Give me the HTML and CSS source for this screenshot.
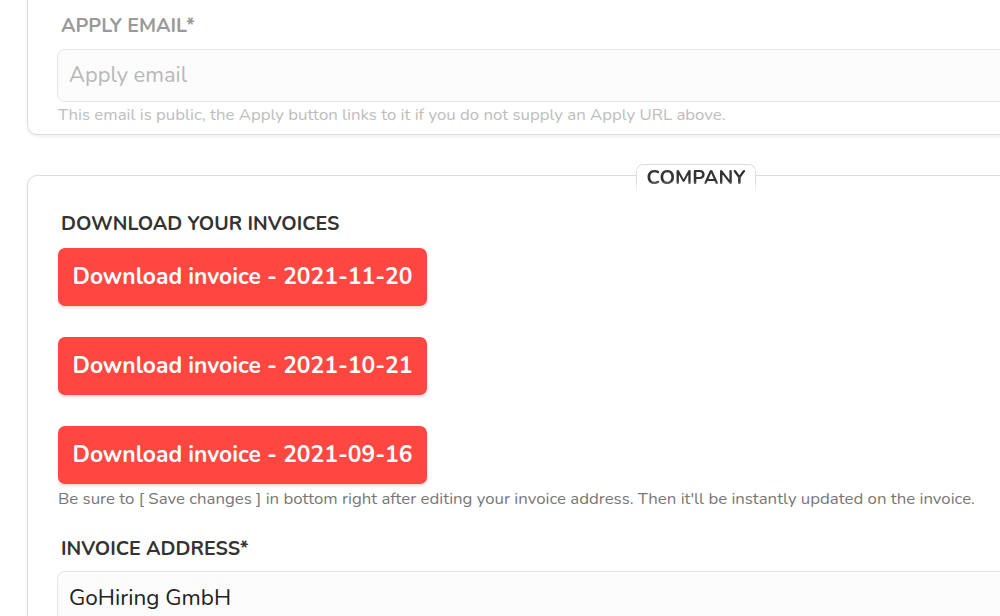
FILE: index.html
```html
<!DOCTYPE html>
<html>
<head>
<meta charset="utf-8">
<link rel="stylesheet" href="styles.css">
</head>
<body>
<div class="page">
  <section class="card card-top">
    <label class="label label-muted">APPLY EMAIL*</label>
    <div class="input placeholder">Apply email</div>
    <p class="help help-light">This email is public, the Apply button links to it if you do not supply an Apply URL above.</p>
  </section>

  <section class="card card-company">
    <div class="tab">COMPANY</div>
    <label class="label">DOWNLOAD YOUR INVOICES</label>
    <div class="buttons">
      <a class="btn">Download invoice - 2021-11-20</a>
      <a class="btn">Download invoice - 2021-10-21</a>
      <a class="btn">Download invoice - 2021-09-16</a>
    </div>
    <p class="help">Be sure to [ Save changes ] in bottom right after editing your invoice address. Then it'll be instantly updated on the invoice.</p>
    <label class="label label-address">INVOICE ADDRESS*</label>
    <div class="input value">GoHiring GmbH</div>
  </section>
</div>
</body>
</html>
```

FILE: styles.css
```css
html, body {
  margin: 0;
  padding: 0;
  background: #ffffff;
  overflow: hidden;
  height: 616px;
}

body {
  font-family: "Nunito", "Lato", "Open Sans", sans-serif;
  color: #333;
}

.page {
  padding-left: 27px;
  margin-top: -40px;
  width: 1336px;
}

.card {
  position: relative;
  border: 1px solid #dcdcdc;
  border-radius: 10px;
  box-shadow: 0 2px 3px rgba(0, 0, 0, 0.06);
  padding: 0 30px;
  background: #fff;
}

.card-top {
  padding-top: 55px;
  padding-bottom: 9px;
}

.card-company {
  margin-top: 40px;
  padding-top: 38px;
  padding-bottom: 40px;
}

.tab {
  position: absolute;
  top: -12px;
  left: 608px;
  width: 120px;
  height: 28px;
  box-sizing: border-box;
  border: 1px solid #dcdcdc;
  border-bottom: none;
  border-radius: 7px 7px 0 0;
  background: #fff;
  text-align: center;
  font-weight: 700;
  font-size: 19.8px;
  line-height: 26px;
  color: #333;
  -webkit-mask-image: linear-gradient(#000 60%, rgba(0,0,0,0.0));
}

.label {
  display: block;
  font-weight: 700;
  font-size: 19.6px;
  line-height: 20px;
  padding-left: 3px;
  color: #333;
}

.label-muted {
  color: #9a9a9a;
}

.card-top .label {
  margin-bottom: 13px;
}

.input {
  height: 53px;
  box-sizing: border-box;
  border: 1px solid #e6e6e6;
  border-radius: 8px;
  background: #fcfcfc;
  margin-left: -1px;
  padding-left: 11px;
  font-size: 21.9px;
  line-height: 51px;
}

.placeholder {
  color: #b8b8b8;
}

.value {
  color: #222;
  font-size: 22.5px;
}

.help {
  margin: 3px 0 0;
  font-size: 16.8px;
  line-height: 20px;
  color: #777;
}

.help-light {
  color: #bdbdbd;
}

.buttons {
  display: flex;
  flex-direction: column;
  align-items: flex-start;
  gap: 31px;
  margin-top: 14px;
}

.btn {
  display: block;
  height: 58px;
  width: 369px;
  box-sizing: border-box;
  background: #ff4742;
  border-radius: 7px;
  color: #fff;
  font-weight: 700;
  font-size: 22.8px;
  line-height: 58px;
  text-align: center;
  box-shadow: 0 2px 3px rgba(180, 40, 40, 0.18);
}

.card-company .help {
  margin-top: 5px;
}

.label-address {
  margin-top: 30px;
  margin-bottom: 12px;
}

.card-company .input {
  height: 60px;
  line-height: 52px;
}
```
